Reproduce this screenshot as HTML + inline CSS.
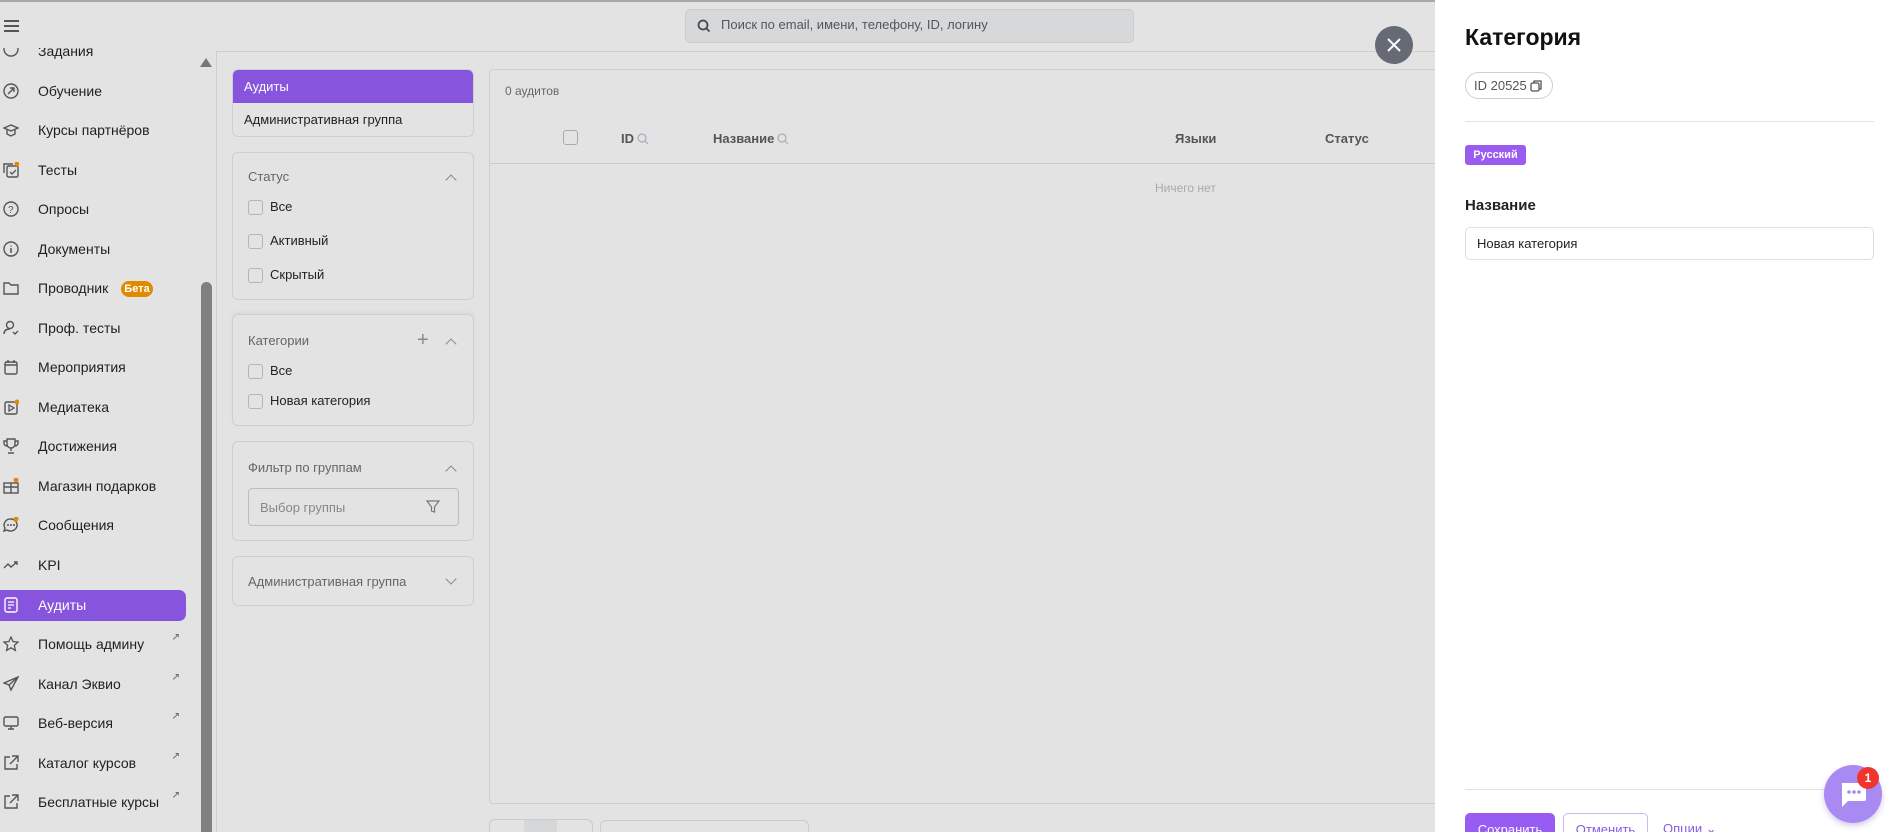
<!DOCTYPE html>
<html style="overflow:hidden;height:832px"><head><meta charset="utf-8"><style>
*{box-sizing:border-box;margin:0;padding:0}
body{width:1893px;height:832px;overflow:hidden;position:relative;background:#e3e3e3;font-family:"Liberation Sans",Arial,sans-serif;color:#1f1f1f}
#w{position:absolute;left:0;top:0;width:1893px;height:832px;overflow:hidden}
.abs{position:absolute}
.topline{left:0;top:0;width:1435px;height:2px;background:#a9a9a9}
.side{left:0;top:48px;width:200px;height:784px;overflow:hidden}
.item{position:absolute;left:0;width:186px;height:31px;font-size:14px;line-height:31px;padding-left:38px;color:#1f1f1f}
.item svg{position:absolute;left:3px;top:7px}
.item.act{background:#8755dd;color:#fff;border-radius:0 7px 7px 0}
.arr{position:absolute;right:6px;top:-7px;font-size:10px;color:#555}
.card{position:absolute;border:1px solid #cfcfcf;border-radius:6px;background:#e3e3e3}
.ttl{position:absolute;font-size:13px;color:#666}
.cb{position:absolute;width:15px;height:15px;border:1px solid #b5b5b5;border-radius:3px}
.lbl{position:absolute;font-size:13px;color:#222}
.chev{position:absolute;width:8px;height:8px;border-left:1.5px solid #888;border-top:1.5px solid #888;transform:rotate(45deg)}
.th{position:absolute;top:131px;font-size:13px;font-weight:bold;color:#555}
</style></head><body><div id="w">
<div class="abs topline"></div>
<div class="abs" style="left:4px;top:20px;width:15px;height:2px;background:#555"></div>
<div class="abs" style="left:4px;top:25px;width:15px;height:2px;background:#555"></div>
<div class="abs" style="left:4px;top:30px;width:15px;height:2px;background:#555"></div>
<div class="abs side">
 <div class="item" style="top:-12px"><svg width="16" height="16"><circle cx="8" cy="6" r="7" fill="none" stroke="#555" stroke-width="1.4"/></svg>Задания</div>
 <div class="item" style="top:28px"><svg width="16" height="16"><circle cx="8" cy="8" r="7" fill="none" stroke="#555" stroke-width="1.4"/><path d="M5 11L11 5M7 5h4v4" stroke="#555" fill="none" stroke-width="1.4"/></svg>Обучение</div>
 <div class="item" style="top:67px"><svg width="16" height="16"><path d="M1 6L8 3l7 3-7 3zM4 8v4l4 2 4-2V8" stroke="#555" fill="none" stroke-width="1.4"/></svg>Курсы партнёров</div>
 <div class="item" style="top:107px"><svg width="16" height="16"><rect x="4" y="4" width="11" height="11" rx="1.5" fill="none" stroke="#555" stroke-width="1.4"/><path d="M1 11V2h9" stroke="#555" fill="none" stroke-width="1.4"/><path d="M7 10l2 2 4-4" stroke="#555" fill="none" stroke-width="1.3"/><circle cx="14" cy="2" r="2.5" fill="#e08a00"/></svg>Тесты</div>
 <div class="item" style="top:146px"><svg width="16" height="16"><circle cx="8" cy="8" r="7" fill="none" stroke="#555" stroke-width="1.4"/><text x="5" y="12" font-size="10" fill="#555">?</text></svg>Опросы</div>
 <div class="item" style="top:186px"><svg width="16" height="16"><circle cx="8" cy="8" r="7" fill="none" stroke="#555" stroke-width="1.4"/><path d="M8 7v5M8 4.5v1" stroke="#555" stroke-width="1.5"/></svg>Документы</div>
 <div class="item" style="top:225px"><svg width="16" height="16"><path d="M1 3h5l2 2h7v9H1z" stroke="#555" fill="none" stroke-width="1.4"/></svg>Проводник<span style="position:absolute;left:121px;top:8px;width:32px;height:16px;border-radius:8px;background:#e08a00;color:#fff;font-size:11px;line-height:16px;text-align:center;font-weight:bold">Бета</span></div>
 <div class="item" style="top:265px"><svg width="16" height="16"><circle cx="7" cy="5" r="3.5" fill="none" stroke="#555" stroke-width="1.4"/><path d="M1 14c0-4 3-5 6-5M10 12l2 2 3-3" stroke="#555" fill="none" stroke-width="1.4"/></svg>Проф. тесты</div>
 <div class="item" style="top:304px"><svg width="16" height="16"><rect x="2" y="3" width="12" height="12" rx="1.5" fill="none" stroke="#555" stroke-width="1.4"/><path d="M5 1v3M11 1v3M2 6h12" stroke="#555" stroke-width="1.4"/></svg>Мероприятия</div>
 <div class="item" style="top:344px"><svg width="16" height="16"><rect x="2" y="3" width="12" height="12" rx="1.5" fill="none" stroke="#555" stroke-width="1.4"/><path d="M6 6v6l5-3z" stroke="#555" fill="none" stroke-width="1.3"/><circle cx="14" cy="3" r="2.5" fill="#e08a00"/></svg>Медиатека</div>
 <div class="item" style="top:383px"><svg width="16" height="16"><path d="M4 1h8v5a4 4 0 0 1-8 0zM4 3H1v2a3 3 0 0 0 3 3M12 3h3v2a3 3 0 0 1-3 3M8 10v3M5 15h6" stroke="#555" fill="none" stroke-width="1.4"/></svg>Достижения</div>
 <div class="item" style="top:423px"><svg width="16" height="16"><rect x="1" y="5" width="14" height="10" fill="none" stroke="#555" stroke-width="1.4"/><path d="M8 5v10M1 9h14" stroke="#555" stroke-width="1.4"/><circle cx="13" cy="2" r="2.5" fill="#e08a00"/></svg>Магазин подарков</div>
 <div class="item" style="top:462px"><svg width="16" height="16"><path d="M8 2a6.5 6 0 1 1-4 11l-3 1 1-3A6.5 6 0 0 1 8 2z" stroke="#555" fill="none" stroke-width="1.4"/><circle cx="5" cy="8" r="1" fill="#555"/><circle cx="8" cy="8" r="1" fill="#555"/><circle cx="11" cy="8" r="1" fill="#555"/><circle cx="13" cy="2" r="2.5" fill="#e08a00"/></svg>Сообщения</div>
 <div class="item" style="top:502px"><svg width="16" height="16"><path d="M1 11l4-4 3 3 6-5M11 5h3v3" stroke="#555" fill="none" stroke-width="1.4"/></svg>KPI</div>
 <div class="item act" style="top:542px"><svg width="16" height="16"><rect x="2" y="1" width="12" height="14" rx="2" fill="none" stroke="#fff" stroke-width="1.4"/><path d="M5 5h6M5 8h6M5 11h3" stroke="#fff" stroke-width="1.3"/></svg>Аудиты</div>
 <div class="item" style="top:581px"><svg width="16" height="16"><path d="M8 1l2.1 4.6 5 .5-3.8 3.3 1.1 5L8 11.8 3.6 14.4l1.1-5L.9 6.1l5-.5z" stroke="#555" fill="none" stroke-width="1.3"/></svg>Помощь админу<span class="arr">↗</span></div>
 <div class="item" style="top:621px"><svg width="16" height="16"><path d="M15 1L1 7l5 2 2 5zM6 9l9-8" stroke="#555" fill="none" stroke-width="1.4"/></svg>Канал Эквио<span class="arr">↗</span></div>
 <div class="item" style="top:660px"><svg width="16" height="16"><rect x="1" y="2" width="14" height="9" rx="1.5" fill="none" stroke="#555" stroke-width="1.4"/><path d="M8 11v3M5 14h6" stroke="#555" stroke-width="1.4"/></svg>Веб-версия<span class="arr">↗</span></div>
 <div class="item" style="top:700px"><svg width="16" height="16"><path d="M7 2H2v12h12V9M9 1h6v6M15 1L7 9" stroke="#555" fill="none" stroke-width="1.4"/></svg>Каталог курсов<span class="arr">↗</span></div>
 <div class="item" style="top:739px"><svg width="16" height="16"><path d="M7 2H2v12h12V9M9 1h6v6M15 1L7 9" stroke="#555" fill="none" stroke-width="1.4"/></svg>Бесплатные курсы<span class="arr">↗</span></div>
</div>
<div class="abs" style="left:200px;top:58px;width:0;height:0;border-left:6px solid transparent;border-right:6px solid transparent;border-bottom:9px solid #777"></div>
<div class="abs" style="left:201px;top:282px;width:11px;height:550px;background:#808080;border-radius:6px 6px 0 0"></div>
<div class="abs" style="left:216px;top:51px;width:1220px;height:1px;background:#cfcfcf"></div>
<div class="abs" style="left:216px;top:52px;width:1px;height:780px;background:#cfcfcf"></div>
<div class="abs" style="left:685px;top:9px;width:449px;height:34px;background:#d7d8da;border:1px solid #cdcdcd;border-radius:5px"></div>
<svg class="abs" style="left:697px;top:19px" width="14" height="14"><circle cx="6" cy="6" r="4.5" fill="none" stroke="#444" stroke-width="1.7"/><path d="M9.5 9.5l3 3" stroke="#444" stroke-width="1.7"/></svg>
<div class="abs" style="left:721px;top:17px;font-size:13px;color:#555">Поиск по email, имени, телефону, ID, логину</div>
<div class="card" style="left:232px;top:69px;width:242px;height:68px;overflow:hidden">
 <div style="height:33px;background:#8755dd;color:#fff;font-size:13px;line-height:33px;padding-left:11px">Аудиты</div>
 <div style="font-size:13px;line-height:34px;padding-left:11px;color:#222">Административная группа</div>
</div>
<div class="card" style="left:232px;top:152px;width:242px;height:148px">
 <div class="ttl" style="left:15px;top:16px">Статус</div><div class="chev" style="left:214px;top:23px"></div>
 <div class="cb" style="left:15px;top:47px"></div><div class="lbl" style="left:37px;top:46px">Все</div>
 <div class="cb" style="left:15px;top:81px"></div><div class="lbl" style="left:37px;top:80px">Активный</div>
 <div class="cb" style="left:15px;top:115px"></div><div class="lbl" style="left:37px;top:114px">Скрытый</div>
</div>
<div class="card" style="left:232px;top:314px;width:242px;height:112px;box-shadow:0 -2px 3px #d4dbe0">
 <div class="ttl" style="left:15px;top:18px">Категории</div>
 <div class="abs" style="left:184px;top:17px;font-size:20px;line-height:16px;color:#888">+</div>
 <div class="chev" style="left:214px;top:25px"></div>
 <div class="cb" style="left:15px;top:49px"></div><div class="lbl" style="left:37px;top:48px">Все</div>
 <div class="cb" style="left:15px;top:79px"></div><div class="lbl" style="left:37px;top:78px">Новая категория</div>
</div>
<div class="card" style="left:232px;top:441px;width:242px;height:100px">
 <div class="ttl" style="left:15px;top:18px">Фильтр по группам</div><div class="chev" style="left:214px;top:25px"></div>
 <div class="abs" style="left:15px;top:46px;width:211px;height:38px;border:1px solid #bdbdbd;border-radius:4px"></div>
 <div class="abs" style="left:27px;top:58px;font-size:13px;color:#888">Выбор группы</div>
 <svg class="abs" style="left:193px;top:58px" width="14" height="14"><path d="M1 1h12L8.5 7v5l-3-1V7z" fill="none" stroke="#777" stroke-width="1.2"/></svg>
</div>
<div class="card" style="left:232px;top:556px;width:242px;height:50px">
 <div class="ttl" style="left:15px;top:17px">Административная группа</div>
 <div class="chev" style="left:214px;top:18px;transform:rotate(225deg)"></div>
</div>
<div class="card" style="left:489px;top:69px;width:1000px;height:735px;border-radius:4px"></div>
<div class="abs" style="left:505px;top:84px;font-size:12px;color:#666">0 аудитов</div>
<div class="cb" style="left:563px;top:130px;border-color:#aaa"></div>
<div class="th" style="left:621px">ID</div>
<svg class="abs" style="left:637px;top:133px" width="12" height="12"><circle cx="5" cy="5" r="4" fill="none" stroke="#aab" stroke-width="1.2"/><path d="M8 8l3 3" stroke="#aab" stroke-width="1.2"/></svg>
<div class="th" style="left:713px">Название</div>
<svg class="abs" style="left:777px;top:133px" width="12" height="12"><circle cx="5" cy="5" r="4" fill="none" stroke="#aab" stroke-width="1.2"/><path d="M8 8l3 3" stroke="#aab" stroke-width="1.2"/></svg>
<div class="th" style="left:1175px">Языки</div>
<div class="th" style="left:1325px">Статус</div>
<div class="abs" style="left:490px;top:163px;width:1000px;height:1px;background:#cbcbcb"></div>
<div class="abs" style="left:1155px;top:181px;font-size:12px;color:#aaa">Ничего нет</div>
<div class="abs" style="left:489px;top:819px;width:104px;height:20px;border:1px solid #cbcbcb;border-radius:6px"></div>
<div class="abs" style="left:524px;top:820px;width:33px;height:12px;background:#d6d7d9"></div>
<div class="abs" style="left:600px;top:820px;width:209px;height:20px;border:1px solid #cbcbcb;border-radius:6px"></div>
<div class="abs" style="left:1375px;top:26px;width:38px;height:38px;border-radius:50%;background:#656a75"></div>
<svg class="abs" style="left:1386px;top:37px" width="16" height="16"><path d="M2 2l12 12M14 2L2 14" stroke="#fff" stroke-width="2"/></svg>
<div class="abs" style="left:1435px;top:0;width:458px;height:832px;background:#fff"></div>
<div class="abs" style="left:1465px;top:24px;font-size:23px;font-weight:bold;color:#111">Категория</div>
<div class="abs" style="left:1465px;top:72px;width:88px;height:27px;border:1px solid #cfcfcf;border-radius:14px"></div>
<div class="abs" style="left:1474px;top:78px;font-size:13px;color:#555">ID 20525</div>
<svg class="abs" style="left:1530px;top:79px" width="14" height="14"><rect x="1" y="4" width="8" height="8" rx="1.5" fill="none" stroke="#555" stroke-width="1.3"/><path d="M4 4V2h7v8H9" fill="none" stroke="#555" stroke-width="1.3"/></svg>
<div class="abs" style="left:1465px;top:121px;width:409px;height:1px;background:#e2e2e2"></div>
<div class="abs" style="left:1465px;top:145px;width:61px;height:20px;border-radius:3px;background:#9a5bf0;color:#fff;font-size:11px;font-weight:bold;line-height:20px;text-align:center">Русский</div>
<div class="abs" style="left:1465px;top:197px;font-size:15px;font-weight:bold;color:#222">Название</div>
<div class="abs" style="left:1465px;top:227px;width:409px;height:33px;border:1px solid #e0e0e0;border-radius:5px"></div>
<div class="abs" style="left:1477px;top:236px;font-size:13px;color:#222">Новая категория</div>
<div class="abs" style="left:1465px;top:789px;width:362px;height:1px;background:#e2e2e2"></div>
<div class="abs" style="left:1465px;top:813px;width:90px;height:30px;border-radius:5px;background:#975cf2;color:#fff;font-size:13px;line-height:34px;text-align:center">Сохранить</div>
<div class="abs" style="left:1563px;top:813px;width:85px;height:30px;border-radius:5px;border:1px solid #cbb6f6;color:#8a5ae6;font-size:13px;line-height:32px;text-align:center">Отменить</div>
<div class="abs" style="left:1663px;top:821px;font-size:13px;color:#8a5ae6">Опции ⌄</div>
<div class="abs" style="left:1824px;top:765px;width:58px;height:58px;border-radius:50%;background:#a98af2;box-shadow:0 3px 6px rgba(120,90,200,.3)"></div>
<svg class="abs" style="left:1838px;top:781px" width="30" height="28"><path d="M4 2h22a2 2 0 0 1 2 2v14a2 2 0 0 1-2 2H10l-6 6V4a2 2 0 0 1 0-2z" fill="#fff"/><circle cx="11" cy="11" r="1.8" fill="#a98af2"/><circle cx="16" cy="11" r="1.8" fill="#a98af2"/><circle cx="21" cy="11" r="1.8" fill="#a98af2"/></svg>
<div class="abs" style="left:1857px;top:767px;width:22px;height:22px;border-radius:50%;background:#f0352e;color:#fff;font-size:12px;font-weight:bold;line-height:22px;text-align:center">1</div>
</div></body></html>
